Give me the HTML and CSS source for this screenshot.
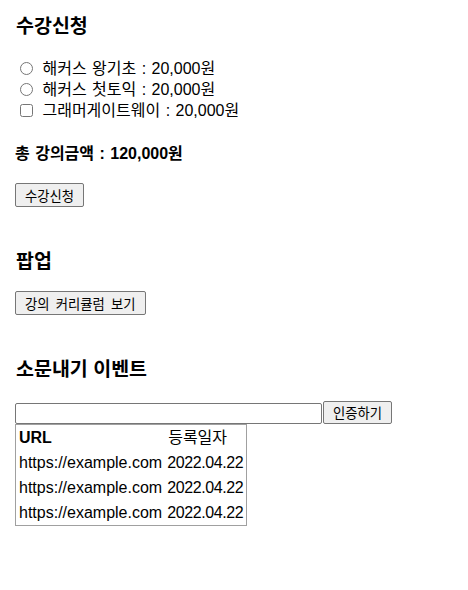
FILE: index.html
```html
<!DOCTYPE html>
<html lang="ko">
<head>
<meta charset="utf-8">
<title>수강신청</title>
<link rel="stylesheet" href="styles.css">
</head>
<body>
<main class="page">
  <section class="block">
    <h3 class="title first">수강신청</h3>
    <div class="options">
      <label class="opt"><input type="radio" name="c"> 해커스 왕기초 : 20,000원</label>
      <label class="opt"><input type="radio" name="c"> 해커스 첫토익 : 20,000원</label>
      <label class="opt"><input type="checkbox"> 그래머게이트웨이 : 20,000원</label>
    </div>
    <p class="total">총 강의금액 : 120,000원</p>
    <button class="btn">수강신청</button>
  </section>
  <section class="block">
    <h3 class="title">팝업</h3>
    <button class="btn">강의 커리큘럼 보기</button>
  </section>
  <section class="block">
    <h3 class="title">소문내기 이벤트</h3>
    <div class="form-row">
      <input class="url-input" type="text">
      <button class="btn btn-small">인증하기</button>
    </div>
    <table class="list">
      <tr><th>URL</th><td>등록일자</td></tr>
      <tr><td>https://example.com</td><td class="date">2022.04.22</td></tr>
      <tr><td>https://example.com</td><td class="date">2022.04.22</td></tr>
      <tr><td>https://example.com</td><td class="date">2022.04.22</td></tr>
    </table>
  </section>
</main>
</body>
</html>
```
FILE: styles.css
```css
html, body {
  margin: 0;
  padding: 0;
  background: #fff;
}
body {
  font-family: "Liberation Sans", "Noto Sans CJK KR", sans-serif;
  font-size: 16px;
  color: #000;
}
.page {
  padding: 0 15px;
}
.title {
  font-family: "Noto Sans CJK KR", sans-serif;
  font-size: 19.5px;
  font-weight: bold;
  line-height: 25px;
  margin: 39.5px 0 0 1px;
}
.title.first {
  margin-top: 12px;
}
.options {
  margin-top: 21px;
  display: flex;
  flex-direction: column;
}
.opt {
  line-height: 21px;
  height: 21px;
  display: block;
  word-spacing: 1px;
}
.opt input {
  margin: 0 4px 0 5px;
  width: 13px;
  height: 13px;
  vertical-align: -1px;
}
.total {
  margin: 21.5px 0 0;
  line-height: 21px;
  font-weight: bold;
  word-spacing: 1px;
}
.btn {
  display: block;
  margin-top: 19.5px;
  height: 24px;
  padding: 0 9px;
  font-family: "Noto Sans CJK KR", sans-serif;
  font-size: 13.33px;
  word-spacing: 2.5px;
  background: #efefef;
  border: 1px solid #767676;
  border-radius: 2px;
  color: #000;
}
.form-row {
  display: flex;
  align-items: flex-end;
  gap: 1px;
  margin-top: 21.5px;
}
.url-input {
  width: 307px;
  height: 21px;
  box-sizing: border-box;
  border: 1px solid #767676;
  border-radius: 2px;
  margin: 0;
  padding: 1px 2px;
}
.btn-small {
  margin: 0;
  height: 23px;
  width: 69px;
  padding: 0;
}
.list {
  border: 1px solid #a0a0a0;
  border-collapse: separate;
  border-spacing: 0;
}
.list th, .list td {
  padding: 2px 3px;
  line-height: 21px;
  text-align: left;
  white-space: nowrap;
}
.list td + td {
  padding-left: 2px;
  padding-right: 3px;
}
.list .date {
  letter-spacing: -0.4px;
}
.list th {
  font-weight: bold;
}
```
